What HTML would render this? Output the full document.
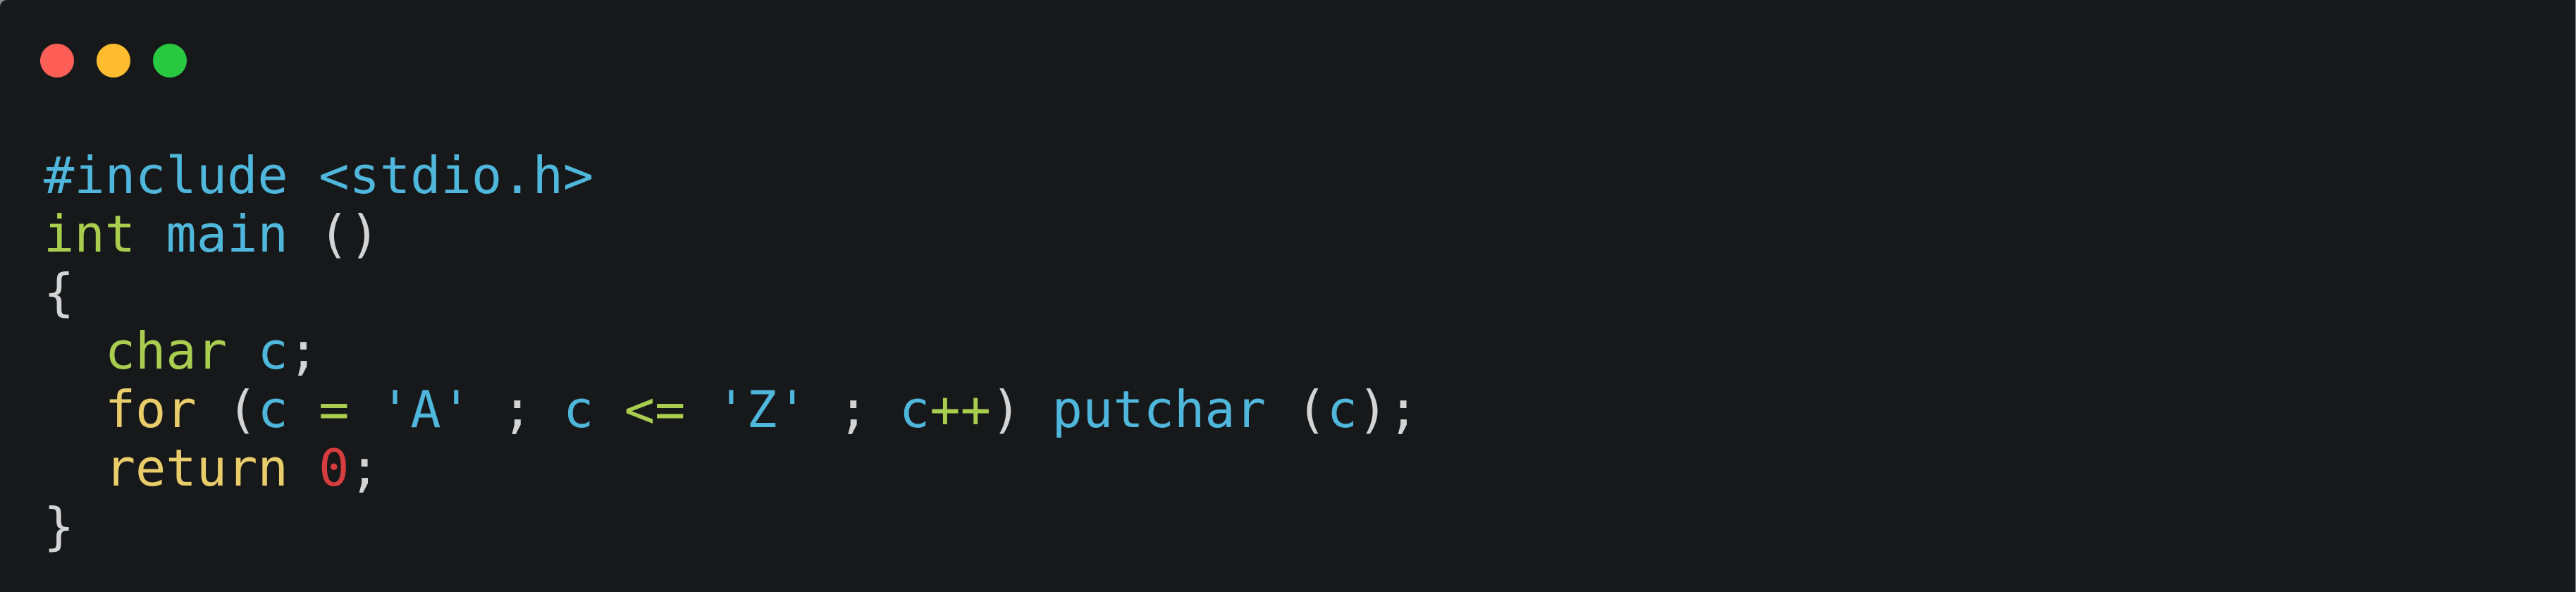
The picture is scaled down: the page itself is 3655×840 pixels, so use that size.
<!DOCTYPE html>
<html><head><meta charset="utf-8"><style>
html,body{margin:0;padding:0;background:#8a8a8a;width:3655px;height:840px;overflow:hidden}
.win{position:absolute;left:0;top:0;width:3654px;height:840px;background:#17181a;border-top-left-radius:10px}
.dot{position:absolute;top:62px;width:48px;height:48px;border-radius:50%}
pre{position:absolute;left:62px;top:208px;margin:0;font-family:"DejaVu Sans Mono","Liberation Mono",monospace;font-size:72px;line-height:83px;color:#d4d4d4}
.b{color:#4fb6dc}.g{color:#a8cd4f}.y{color:#e8cd6a}.r{color:#d63d3f}
</style></head><body><div class="win">
<div class="dot" style="left:57px;background:#ff5f57"></div>
<div class="dot" style="left:137px;background:#febc2e"></div>
<div class="dot" style="left:217px;background:#28c840"></div>
<pre><span class="b">#include &lt;stdio.h&gt;</span>
<span class="g">int</span> <span class="b">main</span> ()
{
  <span class="g">char</span> <span class="b">c</span>;
  <span class="y">for</span> (<span class="b">c</span> <span class="g">=</span> <span class="b">'A'</span> ; <span class="b">c</span> <span class="g">&lt;=</span> <span class="b">'Z'</span> ; <span class="b">c</span><span class="g">++</span>) <span class="b">putchar</span> (<span class="b">c</span>);
  <span class="y">return</span> <span class="r">0</span>;
}</pre>
</div></body></html>
